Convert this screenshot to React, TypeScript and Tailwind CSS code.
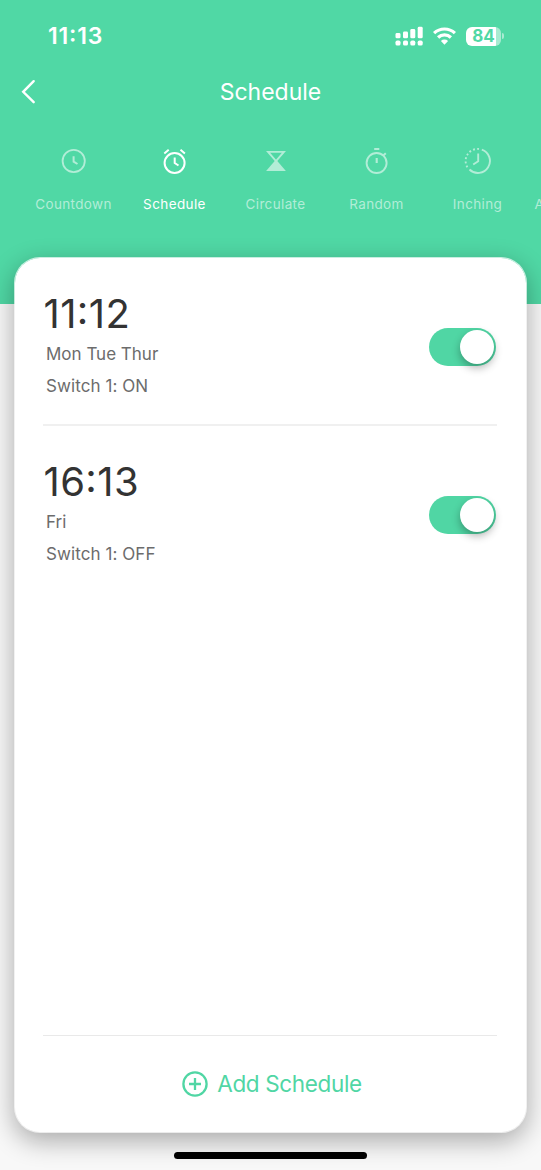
import { useState, type ReactNode } from 'react';

function StatusBar() {
  return (
    <div className="flex h-[72px] items-center justify-between pr-[37px] pl-[48px] text-white">
      <span className="text-[23px] leading-none font-semibold tracking-[0.8px] [font-feature-settings:'case'_1]">11:13</span>
      <div className="flex items-center">
        <svg className="block h-[20px] w-[28px]" viewBox="0 0 28 20" fill="currentColor">
          <rect x="0.5" y="7" width="5" height="5.3" rx="1.4" />
          <rect x="8" y="5.5" width="5" height="6.8" rx="1.4" />
          <rect x="15.3" y="3" width="5" height="9.3" rx="1.4" />
          <rect x="22.7" y="0.8" width="5" height="11.5" rx="1.4" />
          <rect x="0.5" y="14.6" width="5" height="5" rx="1.7" />
          <rect x="8" y="14.6" width="5" height="5" rx="1.7" />
          <rect x="15.3" y="14.6" width="5" height="5" rx="1.7" />
          <rect x="22.7" y="14.6" width="5" height="5" rx="1.7" />
        </svg>
        <svg className="ml-[10px] block h-[18px] w-[23px]" viewBox="0 0 23 18" fill="none" stroke="currentColor" strokeWidth="3.2">
          <path d="M1.1 6.2 A15 15 0 0 1 21.9 6.2" />
          <path d="M5.1 10.5 A9.2 9.2 0 0 1 17.9 10.5" />
          <path d="M11.5 17.8 L7.9 14 A5.1 5.1 0 0 1 15.1 14 Z" fill="currentColor" stroke="none" />
        </svg>
        <div className="ml-[10px] flex items-center">
          <div className="flex h-[19px] w-[35px] items-center justify-center rounded-[6px] bg-[linear-gradient(90deg,#fff_30px,#a8ebd2_30px)]">
            <span className="text-[17px] leading-none font-bold text-[#50d8a5]">84</span>
          </div>
          <div className="ml-[1px] h-[6px] w-[2px] rounded-r-full bg-[#a8ebd2]" />
        </div>
      </div>
    </div>
  );
}

function CountdownIcon() {
  return (
    <svg className="size-[28px]" viewBox="0 0 28 28" fill="none" stroke="currentColor" strokeWidth="1.8">
      <circle cx="13.7" cy="14" r="11.1" />
      <path d="M13.6 9.3V14.6L17.5 17" strokeWidth="2" />
    </svg>
  );
}

function AlarmIcon() {
  return (
    <svg className="size-[28px]" viewBox="0 0 28 28" fill="none" stroke="currentColor" strokeWidth="2">
      <circle cx="13.6" cy="16" r="10" />
      <path d="M13.7 10.4V16L17.5 18.5M3.3 6.4L7.7 2.8M19.5 2.8L23.9 6.4" />
    </svg>
  );
}

function HourglassIcon() {
  return (
    <svg className="size-[28px]" viewBox="0 0 28 28" fill="none" stroke="currentColor" strokeWidth="1.9">
      <path d="M6.1 4.9H21.9L14 14Z" />
      <path d="M14 12.5L23.9 23.9H4.1Z" fill="currentColor" stroke="none" />
    </svg>
  );
}

function StopwatchIcon() {
  return (
    <svg className="size-[28px]" viewBox="0 0 28 28" fill="none" stroke="currentColor" strokeWidth="1.9">
      <circle cx="13.6" cy="16" r="10" />
      <path d="M13.7 11V16M11.2 2H16.3M20.5 8.3L22.8 6.3" strokeWidth="2.1" />
    </svg>
  );
}

function InchingIcon() {
  return (
    <svg className="size-[28px]" viewBox="0 0 28 28" fill="none" stroke="currentColor" strokeWidth="1.9">
      <path d="M17.8 2.6A12 12 0 1 1 5.5 22.5" />
      <path d="M14.2 6.5V14.2L9.2 17.5" />
      <path d="M3.4 20.2A12 12 0 0 1 15 2" strokeDasharray="1.9 2.2" />
    </svg>
  );
}

function Tab({ icon, label, active = false }: { icon?: ReactNode; label: string; active?: boolean }) {
  return (
    <button
      className={`flex w-[101px] shrink-0 flex-col items-center ${active ? 'text-white' : 'text-[#b2edd7]'}`}
    >
      <span className="block size-[28px]">{icon}</span>
      <span
        className={`mt-[19px] text-[13.5px] leading-[20px] ${active ? 'tracking-[0.4px]' : 'tracking-[0.35px]'}`}
      >
        {label}
      </span>
    </button>
  );
}

function Toggle() {
  const [on, setOn] = useState(true);
  return (
    <button
      role="switch"
      aria-checked={on}
      onClick={() => setOn(!on)}
      className={`mt-[31px] mr-px flex h-[38px] w-[67px] items-center rounded-full px-[2px] ${
        on ? 'justify-end bg-[#50d6a4]' : 'justify-start bg-gray-200'
      }`}
    >
      <span className="size-[34px] rounded-full bg-white shadow-[0_4px_9px_rgba(0,0,0,0.3)]" />
    </button>
  );
}

function ScheduleRow({ time, days, action }: { time: string; days: string; action: string }) {
  return (
    <div className="flex items-start justify-between pt-[39px]">
      <div>
        <div className="pl-[0.5px] text-[40px] leading-[34px] font-normal tracking-[0.4px] text-[#333] [font-feature-settings:'case'_1]">
          {time}
        </div>
        <div className="mt-[7px] pl-[3px] text-[17px] leading-[32px] text-[#6c6c6c]">
          <div>{days}</div>
          <div className="tracking-[0.08px]">{action}</div>
        </div>
      </div>
      <Toggle />
    </div>
  );
}

export default function App() {
  return (
    <div className="flex h-[1170px] w-[541px] flex-col overflow-hidden bg-[#f8f8f8] font-['Inter',sans-serif]">
      <header className="h-[304px] shrink-0 bg-[#50d8a5]">
        <StatusBar />
        <div className="grid h-[40px] grid-cols-[1fr_auto_1fr] items-center text-white">
          <svg className="ml-[20px] h-[26px] w-[17px]" viewBox="0 0 17 26" fill="none" stroke="currentColor" strokeWidth="2.4" strokeLinecap="round">
            <path d="M13.7 2.2L3.2 12.8L13.7 23.2" />
          </svg>
          <h1 className="text-[23px] leading-[30px] font-normal">Schedule</h1>
          <span />
        </div>
        <nav className="mt-[35px] flex overflow-hidden pl-[23px]">
          <Tab icon={<CountdownIcon />} label="Countdown" />
          <Tab icon={<AlarmIcon />} label="Schedule" active />
          <Tab icon={<HourglassIcon />} label="Circulate" />
          <Tab icon={<StopwatchIcon />} label="Random" />
          <Tab icon={<InchingIcon />} label="Inching" />
          <Tab label="Astronomical" />
        </nav>
      </header>

      <main className="mr-[14px] ml-[14px] -mt-[47px] flex h-[876px] shrink-0 flex-col rounded-[26px] border border-white/70 bg-white bg-clip-padding pr-[29px] pl-[28px] shadow-[0_8px_26px_rgba(0,0,0,0.32)]">
        <div className="h-[166px]">
          <ScheduleRow time="11:12" days="Mon Tue Thur" action="Switch 1: ON" />
        </div>
        <div className="h-[2px] bg-[#f0f0f0]" />
        <ScheduleRow time="16:13" days="Fri" action="Switch 1: OFF" />
        <div className="mt-auto h-px bg-[#e9e9e9]" />
        <button className="flex h-[96px] shrink-0 items-center justify-center gap-[9px] pl-[4px] text-[#50d6a4]">
          <svg className="size-[26px]" viewBox="0 0 26 26" fill="none" stroke="currentColor" strokeWidth="2.3">
            <circle cx="13" cy="13" r="11.6" />
            <path d="M13 7V19M7 13H19" />
          </svg>
          <span className="text-[22.5px] leading-[30px] font-normal tracking-[-0.35px]">Add Schedule</span>
        </button>
      </main>

      <div className="mx-auto mt-auto mb-[11px] h-[7px] w-[193px] shrink-0 rounded-full bg-black" />
    </div>
  );
}
